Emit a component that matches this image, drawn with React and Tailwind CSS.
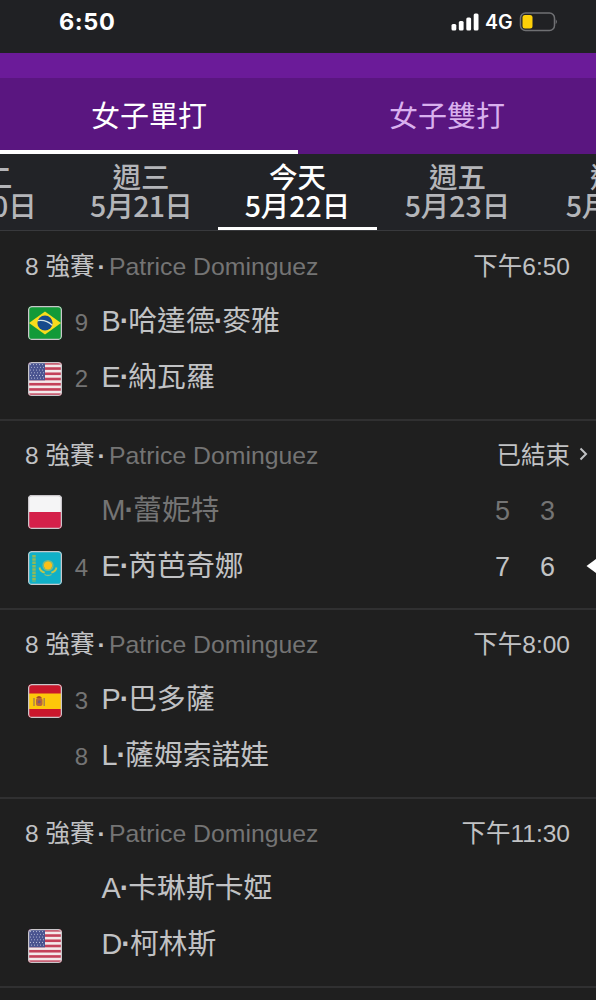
import clsx from 'clsx';

const days = [
  { week: '週二', date: '5月20日', width: 'w-[160px]' },
  { week: '週三', date: '5月21日', width: 'w-[154px]', tight: true },
  { week: '今天', date: '5月22日', width: 'w-[159px]', active: true },
  { week: '週五', date: '5月23日', width: 'w-[161px]' },
  { week: '週六', date: '5月24日', width: 'w-[161px]' },
];

const matches = [
  {
    status: '下午6:50',
    players: [
      { flag: 'br', seed: 9, name: 'B·哈達德·麥雅' },
      { flag: 'us', seed: 2, name: 'E·納瓦羅' },
    ],
  },
  {
    status: '已結束',
    finished: true,
    players: [
      { flag: 'pl', name: 'M·蕾妮特', scores: [5, 3], lost: true },
      { flag: 'kz', seed: 4, name: 'E·芮芭奇娜', scores: [7, 6], won: true },
    ],
  },
  {
    status: '下午8:00',
    players: [
      { flag: 'es', seed: 3, name: 'P·巴多薩' },
      { seed: 8, name: 'L·薩姆索諾娃' },
    ],
  },
  {
    status: '下午11:30',
    players: [
      { name: 'A·卡琳斯卡婭' },
      { flag: 'us', name: 'D·柯林斯' },
    ],
  },
];

const flags = {
  br: (
    <>
      <rect width="34" height="34" fill="#129a38" />
      <path d="M1 17 17 5.5 33 17 17 28.5z" fill="#f8dc1c" />
      <circle cx="17" cy="17" r="7.6" fill="#174a8c" />
      <path d="M10 14.6c5-.8 10.5 1 14.3 4.7" stroke="#d5e3e5" strokeWidth="1.2" fill="none" />
    </>
  ),
  us: (
    <>
      <rect width="34" height="34" fill="#f3e9ea" />
      {[0, 1, 2, 3, 4, 5, 6].map((i) => (
        <rect key={i} y={i * 5.23} width="34" height="2.62" fill="#c4415a" />
      ))}
      <rect width="17" height="18.3" fill="#4a5490" />
      {[0, 1, 2, 3, 4, 5].map((r) =>
        [0, 1, 2, 3, 4].map((c) => (
          <circle key={`${r}-${c}`} cx={2.5 + c * 3 + (r % 2)} cy={2.6 + r * 2.7} r="0.55" fill="#b9bed8" />
        ))
      )}
    </>
  ),
  pl: (
    <>
      <rect width="34" height="17" fill="#f5f5f6" />
      <rect y="17" width="34" height="17" fill="#d4204a" />
    </>
  ),
  kz: (
    <>
      <rect width="34" height="34" fill="#10b0c8" />
      <path d="M6 4v27" stroke="#8fb95a" strokeWidth="3.5" strokeDasharray="2.5 0.8" />
      <circle cx="20" cy="14.5" r="5" fill="none" stroke="#7fbb80" strokeWidth="1.2" />
      <circle cx="20" cy="14.5" r="4.2" fill="#fbc019" />
      <path d="M11.5 16.5c.5 3 2.5 4.5 5.2 5.2M28.5 16.5c-.5 3-2.5 4.500-5.2 5.2" stroke="#c3c548" strokeWidth="1.8" fill="none" />
      <path d="M16.5 23.500q3.5 2 7 0" stroke="#8fc078" strokeWidth="1.3" fill="none" />
    </>
  ),
  es: (
    <>
      <rect width="34" height="34" fill="#c9172c" />
      <rect y="9.5" width="34" height="15.5" fill="#fdc70a" />
      <rect x="8" y="14" width="6.500" height="8" rx="2" fill="#b8663c" />
      <path d="M8 14q3-4 6 0z" fill="#a34a2c" />
      <path d="M6 14v8M16.200 14v8" stroke="#a9854e" strokeWidth="1.5" />
      <circle cx="11.200" cy="17.7" r="1.5" fill="#7b5a76" />
    </>
  ),
};

function Flag({ code }) {
  if (!code) return <div className="w-[34px] shrink-0" />;
  return (
    <div className="size-[34px] shrink-0 overflow-hidden rounded-[4px]">
      <svg viewBox="0 0 34 34" className="size-full">
        {flags[code]}
        <rect x="0.6" y="0.6" width="32.8" height="32.8" rx="3.5" fill="none" stroke="#c9c6ca" strokeWidth="1.3" />
      </svg>
    </div>
  );
}

function StatusBar() {
  return (
    <div className="flex h-[53px] shrink-0 items-start justify-between bg-[#202124] pr-[38px] pl-[59px] text-white">
      <span className="mt-[7px] font-[Inter] text-[23.500px] leading-[30px] font-bold tracking-[0.6px]">6:50</span>
      <div className="mt-[12px] flex items-center">
        <svg width="28" height="18" viewBox="0 0 28 18" fill="#fff">
          <rect x="0.5" y="11" width="4.8" height="6.5" rx="1.5" />
          <rect x="7.8" y="8" width="4.8" height="9.5" rx="1.5" />
          <rect x="15.3" y="4.5" width="4.8" height="13" rx="1.5" />
          <rect x="22.7" y="0.5" width="4.8" height="17" rx="1.5" />
        </svg>
        <span className="ml-[6px] w-[28px] font-[Inter] text-[19.500px] leading-5 font-semibold">4G</span>
        <svg width="39" height="20" viewBox="0 0 39 20" className="ml-[6px]">
          <rect x="1.500" y="1" width="34" height="17.5" rx="5" fill="none" stroke="#6f7073" strokeWidth="1.5" />
          <rect x="3.500" y="3" width="10" height="13.5" rx="2.5" fill="#fdd008" />
          <path d="M36.7 7.3q2.5 2.5 0 5z" fill="#6f7073" />
        </svg>
      </div>
    </div>
  );
}

// The middle dots sit tighter than the font sets them
function PlayerName({ name }) {
  return name.split('·').map((part, i) => (
    <span key={i}>
      {i > 0 && <span className="-mx-[1px] font-bold">·</span>}
      {part}
    </span>
  ));
}

function Player({ player }) {
  return (
    <div className="relative flex h-[56px] items-center pl-[27.5px]">
      <Flag code={player.flag} />
      <span className="ml-[6px] w-[28px] text-center text-[24px] text-[#747474]">{player.seed}</span>
      <span
        className={clsx(
          'mt-[-3px] ml-[6px] flex-1 text-[28.8px] whitespace-nowrap',
          player.lost ? 'text-[#747474]' : 'text-[#c1c2c4]'
        )}
      >
        <PlayerName name={player.name} />
      </span>
      {player.scores && (
        <div className={clsx('-mt-[2px] flex pr-[26px] text-[27px]', player.lost ? 'text-[#747474]' : 'text-[#c1c2c4]')}>
          {player.scores.map((s, i) => (
            <span key={i} className="w-[45px] text-center">{s}</span>
          ))}
        </div>
      )}
      {player.won && (
        <svg width="10" height="16" viewBox="0 0 10 16" className="absolute top-[18px] right-0">
          <path d="M0.500 8 10 1v14z" fill="#fff" />
        </svg>
      )}
    </div>
  );
}

function Match({ match }) {
  return (
    <div className="h-[189px] shrink-0 border-b-2 border-[#303031] pt-[7px]">
      <div className="flex h-[56px] items-center justify-between pr-[26px] pl-[25px] text-[24.5px]">
        <div className="flex items-center whitespace-nowrap">
          <span className="w-[84px] text-[#c1c2c4]">
            8 強賽<span className="ml-[3px] font-bold">·</span>
          </span>
          <span className="text-[24.8px] text-[#747474]">Patrice Dominguez</span>
        </div>
        <div className="relative text-[#c1c2c4]">
          {match.status}
          {match.finished && (
            <svg width="9" height="14" viewBox="0 0 9 14" className="absolute top-[9px] -right-[18px]">
              <path d="M1.5 1.5 7 7l-5.5 5.5" fill="none" stroke="#c1c2c4" strokeWidth="2" />
            </svg>
          )}
        </div>
      </div>
      {match.players.map((p) => (
        <Player key={p.name} player={p} />
      ))}
    </div>
  );
}

export default function App() {
  return (
    <div className="flex h-[1000px] w-[596px] flex-col overflow-hidden bg-[#1f1f1f] font-['Liberation_Sans','Noto_Sans_CJK_TC',sans-serif]">
      <StatusBar />
      <div className="h-[25px] shrink-0 bg-[#6b1b99]" />
      <div className="flex h-[76px] shrink-0 bg-[#5a1680] font-['Noto_Sans_CJK_TC',sans-serif] text-[29px]">
        <div className="flex flex-1 items-center justify-center border-b-4 border-white pt-[2px] text-white">女子單打</div>
        <div className="flex flex-1 items-center justify-center border-b-4 border-transparent pt-[2px] text-[#d9b0ee]">女子雙打</div>
      </div>

      {/* Date strip, scrolled so that today is in the middle */}
      <div className="h-[77px] shrink-0 overflow-hidden bg-[#222327]">
        <div className="-ml-[96px] flex h-full w-[795px] border-b border-[#38393c] font-['Noto_Sans_CJK_TC',sans-serif]">
          {days.map((d) => (
            <div
              key={d.date}
              className={clsx(
                'flex shrink-0 flex-col items-center border-b-[3px] pt-[7px] text-[28.5px] leading-[29px] font-medium whitespace-nowrap',
                d.width,
                d.active ? 'border-white text-white' : 'border-transparent text-[#b4b5b9]'
              )}
            >
              <span>{d.week}</span>
              <span className={clsx(d.tight && 'tracking-[-0.7px]')}>{d.date}</span>
            </div>
          ))}
        </div>
      </div>

      <div className="flex flex-col pt-[1px]">
        {matches.map((m) => (
          <Match key={m.status} match={m} />
        ))}
      </div>
    </div>
  );
}
